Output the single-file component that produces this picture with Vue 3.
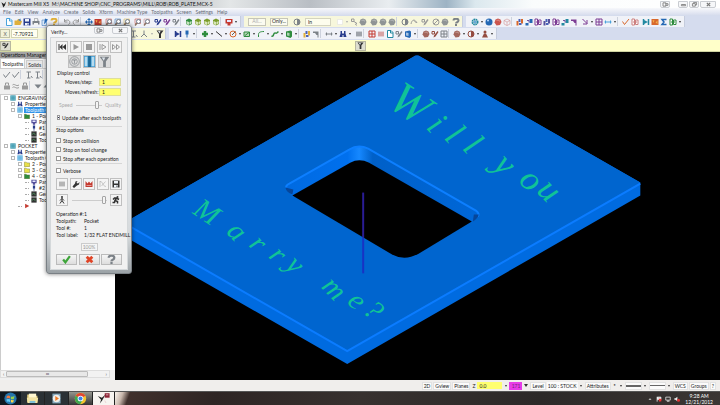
<script setup>
import { ref } from 'vue'

const menus = ['File', 'Edit', 'View', 'Analyze', 'Create', 'Solids', 'Xform', 'Machine Type', 'Toolpaths', 'Screen', 'Settings', 'Help']

// Each entry is "icon:colour"; "v" is a drop-down arrow, "|" and "||" are separators.
const parse = (s) => s.split(' ').map((t, id) => {
  const [icon, color] = t.split(':')
  return { id, icon, color }
})

const fileTools = parse('doc:sky folder:gold save:navy print:slate page:blue help:gold || undo:grey redo:grey || move:blue tiles:red | zoom:red zoom:blue zoom:gold | zoom:red zoom:rose | pen:navy pen:purple pen:slate || cube:green cube:lime cube:lime cube:lime || screen:red v')
const selectTools = parse('sheet:pale v pick:grey blob:slate | blob:slate blob:slate blob:slate || half:slate arc:grey | pen:grey | ban:grey blob:slate | help:slate')
const xformTools = parse('gear:teal v ball:blue blob:red cubeline:rose || bars:orange step:blue frames:purple bars:indigo frames:purple step:teal flag:purple | arrow:purple v grid:purple link:sky v || check:orange frames:rose | join:teal tiles:orange sigma:blue frames:green v')
const sketchA = parse('tee:slate axis:slate v filter:dark')
const sketchB = parse('join:navy pin:blue v || plus:green v line:dark v circle:orange v rect:green v fillet:green v curve:green v book:green v || bars:gold flag:slate || link:slate v people:navy v | panel:slate || grid:red panel:rose doc:teal pen:slate book:blue v || blob:brown pen:brown grid:slate || blob:brown v half:brown v person:brown v')
const managerRow1 = parse('check:slate check:slate | tee:slate tee:slate | gear:grey')
const managerRow2 = parse('lock:grey waves:grey lock:grey || down:slate up:slate tee:grey')

const tree = [
  { d: 0, i: 'node', c: 'teal', t: 'ENGRAVING', x: 1 },
  { d: 1, i: 'people', c: 'navy', t: 'Properties -', x: 1 },
  { d: 1, i: 'node', c: 'sky', t: 'Toolpath Gro', x: 1, sel: true },
  { d: 2, i: 'file', c: 'green', t: '1 - Pocke', x: 1 },
  { d: 3, i: 'screen', c: 'indigo', t: 'Param' },
  { d: 3, i: 'pin', c: 'navy', t: '#1' },
  { d: 3, i: 'chip', c: 'dark', t: 'Geom' },
  { d: 3, i: 'chip', c: 'dark', t: 'Toolp' },
  { d: 0, i: 'node', c: 'teal', t: 'POCKET', x: 1 },
  { d: 1, i: 'people', c: 'navy', t: 'Properties -', x: 1 },
  { d: 1, i: 'node', c: 'sky', t: 'Toolpath Gro', x: 1 },
  { d: 2, i: 'file', c: 'yellow', t: '2 - Pocke', x: 1 },
  { d: 2, i: 'file', c: 'yellow', t: '3 - Conto', x: 1 },
  { d: 2, i: 'file', c: 'green', t: '4 - Conto', x: 1 },
  { d: 3, i: 'screen', c: 'indigo', t: 'Param' },
  { d: 3, i: 'pin', c: 'navy', t: '#2' },
  { d: 3, i: 'chip', c: 'dark', t: 'Geom' },
  { d: 3, i: 'chip', c: 'dark', t: 'Toolp' },
  { d: 2, i: 'play', c: 'red', t: '' },
]

const transport = [
  ['rewind', 'dark', 'Restart'], ['play', 'grey', 'Play'], ['stop', 'grey', 'Stop'],
  ['stepplay', 'grey', 'Step'], ['ff', 'grey', 'Fast forward'],
]
const simulate = [['target', 'slate', 'Simulate tool'], ['tool', 'white', 'Simulate holder'], ['filter', 'slate', 'Filter']]
const options = [['panel', 'grey', 'List'], ['wrench', 'dark', 'Configure'], ['chart', 'red', 'Section'], ['cross', 'grey', 'Compare'], ['save', 'dark', 'Save STL']]
const stops = ref([
  { t: 'Stop on collision', on: false },
  { t: 'Stop on tool change', on: false },
  { t: 'Stop after each operation', on: false },
])
const update = ref(true)
const verbose = ref(false)
const step = ref('1')
const refresh = ref('1')
const quality = ref(85)
const speed = ref(98)
const facts = [['Operation #:', '1'], ['Toolpath:', 'Pocket'], ['Tool #:', '1'], ['Tool label:', '1/32 FLAT ENDMILL']]
</script>

<template>
  <svg class="defs" aria-hidden="true">
    <symbol id="doc" viewBox="0 0 16 16"><path d="M3 1h7l4 4v10H3z" fill="#fff" stroke="currentColor" stroke-width="2" /><path d="M9 1v5h5" fill="none" stroke="currentColor" stroke-width="2" /></symbol>
    <symbol id="sheet" viewBox="0 0 16 16"><path d="M3 3h10v10H3z" fill="#fff" stroke="currentColor" /></symbol>
    <symbol id="folder" viewBox="0 0 16 16"><path d="M1 14V5h5l2-3h4v3h2l2 2-3 7z" fill="currentColor" /><path d="M8 4l5-3 1 6z" fill="#4a83c8" /></symbol>
    <symbol id="save" viewBox="0 0 16 16"><path d="M1 1h14v14H1z" fill="currentColor" /><path d="M4 2h8v5H4zM4 10h8v5H4z" fill="#eef3f8" /><path d="M9 11h2v3H9z" fill="currentColor" /></symbol>
    <symbol id="print" viewBox="0 0 16 16"><path d="M4 1h8l1 5h2v7H1V6h3z" fill="currentColor" /><path d="M5 2h6v4H5zM4 10h8v5H4z" fill="#f4f4f4" /></symbol>
    <symbol id="page" viewBox="0 0 16 16"><path d="M2 4h9v11H2z" fill="#dce9f8" stroke="currentColor" /><path d="M8 1l6 2-6 8-2 1z" fill="currentColor" /></symbol>
    <symbol id="help" viewBox="0 0 16 16"><path d="M3 5C3 0 13 0 13 5c0 4-5 3-5 6" fill="none" stroke="currentColor" stroke-width="4" /><path d="M6 12h4v4H6z" fill="currentColor" /></symbol>
    <symbol id="undo" viewBox="0 0 16 16"><path d="M4 6c8-6 13 4 7 7M3 2v6h6" fill="none" stroke="currentColor" stroke-width="2" /></symbol>
    <symbol id="redo" viewBox="0 0 16 16"><path d="M12 6C4 0-1 10 5 13M13 2v6H7" fill="none" stroke="currentColor" stroke-width="2" /></symbol>
    <symbol id="move" viewBox="0 0 16 16"><path d="M8 0l4 4H4zM8 16l4-4H4zM0 8l4-4v8zM16 8l-4-4v8z" fill="currentColor" /><path d="M8 3v10M3 8h10" stroke="currentColor" stroke-width="2" /></symbol>
    <symbol id="grid" viewBox="0 0 16 16"><path d="M2 2h12v12H2zM2 8h12M8 2v12" fill="none" stroke="currentColor" stroke-width="2" /></symbol>
    <symbol id="tiles" viewBox="0 0 16 16"><path d="M1 2h14v12H1z" fill="currentColor" /><path d="M3 4l4 1-2 5zM9 9l4-4v7z" fill="#f2b04a" /></symbol>
    <symbol id="zoom" viewBox="0 0 16 16"><path d="M2 2h11v9H2z" fill="#e5ebf2" stroke="currentColor" /><circle cx="9" cy="7" r="4" fill="#fff" stroke="#737b88" stroke-width="2" /><path d="M6 10l-4 5" stroke="#8d7462" stroke-width="3" /></symbol>
    <symbol id="pen" viewBox="0 0 16 16"><path d="M2 3h5v5H2z" fill="none" stroke="currentColor" stroke-width="2" /><path d="M13 2l2 2-6 9-4 2 1-4z" fill="currentColor" /></symbol>
    <symbol id="wrench" viewBox="0 0 16 16"><path d="M1 13l5-6 1-4 4-1-2 4 3 1 3-3-1 5-4 2-6 5z" fill="currentColor" /></symbol>
    <symbol id="cube" viewBox="0 0 16 16"><path d="M8 1l6 3v8l-6 3-6-3V4z" fill="currentColor" /><path d="M8 8v6l-5-2V6zM9 8l4-2v5l-4 2z" fill="#f8ffe8" opacity=".75" /></symbol>
    <symbol id="cubeline" viewBox="0 0 16 16"><path d="M8 2l6 3v7l-6 3-6-3V5zM2 5l6 3 6-3M8 8v7" fill="none" stroke="currentColor" /></symbol>
    <symbol id="screen" viewBox="0 0 16 16"><path d="M1 2h14v9H1zM5 11h6v4H5z" fill="currentColor" /><path d="M4 4h8v4H4z" fill="#e6e6ff" /></symbol>
    <symbol id="pick" viewBox="0 0 16 16"><path d="M3 2h5v5H3zM8 7l6 4-3 1 2 3" fill="none" stroke="currentColor" stroke-width="2" /></symbol>
    <symbol id="blob" viewBox="0 0 16 16"><path d="M8 1l5 2 2 5-3 6-7 1-4-6 2-6z" fill="currentColor" opacity=".85" /><path d="M5 5l5-1 1 3" fill="none" stroke="#fff" opacity=".6" /></symbol>
    <symbol id="half" viewBox="0 0 16 16"><circle cx="8" cy="8" r="6" fill="none" stroke="currentColor" stroke-width="2" /><path d="M8 2a6 6 0 0 1 0 12z" fill="currentColor" /></symbol>
    <symbol id="arc" viewBox="0 0 16 16"><path d="M2 12C4 2 10 2 14 10M8 5l5 5" fill="none" stroke="currentColor" stroke-width="2" /></symbol>
    <symbol id="ban" viewBox="0 0 16 16"><circle cx="8" cy="8" r="6" fill="none" stroke="currentColor" stroke-width="2" /><path d="M4 12l8-8" stroke="currentColor" stroke-width="2" /></symbol>
    <symbol id="gear" viewBox="0 0 16 16"><circle cx="8" cy="8" r="5" fill="none" stroke="currentColor" stroke-width="4" stroke-dasharray="3 1" /><circle cx="8" cy="8" r="2" fill="#3b8fd0" /></symbol>
    <symbol id="ball" viewBox="0 0 16 16"><circle cx="8" cy="8" r="7" fill="currentColor" /><circle cx="6" cy="5" r="2" fill="#bcdcff" /></symbol>
    <symbol id="bars" viewBox="0 0 16 16"><path d="M1 6h4v9H1zM10 2h4v9h-4z" fill="currentColor" /><path d="M5 2h4v6H5zM6 10h5v4H6z" fill="#4a62b8" /></symbol>
    <symbol id="step" viewBox="0 0 16 16"><path d="M1 10h6v5H1zM9 2h6v8H9z" fill="currentColor" /><path d="M4 5h4v4" fill="none" stroke="#7453a0" stroke-width="2" /></symbol>
    <symbol id="frames" viewBox="0 0 16 16"><path d="M2 2h5v12H2zM9 4h5v9H9z" fill="#fff" stroke="currentColor" stroke-width="2" /><path d="M4 8h8" stroke="currentColor" stroke-width="2" /></symbol>
    <symbol id="flag" viewBox="0 0 16 16"><path d="M2 3h11v7H9L6 6H2zM11 10h2v5h-2z" fill="currentColor" /></symbol>
    <symbol id="arrow" viewBox="0 0 16 16"><path d="M3 2l9 9M12 4v8H4" fill="none" stroke="currentColor" stroke-width="2" /></symbol>
    <symbol id="link" viewBox="0 0 16 16"><path d="M1 8h14M3 5v6M13 5v6" stroke="currentColor" stroke-width="2" /></symbol>
    <symbol id="check" viewBox="0 0 16 16"><path d="M1 7l4 6 9-11" fill="none" stroke="currentColor" stroke-width="2" /></symbol>
    <symbol id="join" viewBox="0 0 16 16"><path d="M3 2v12M13 2v12" stroke="currentColor" stroke-width="3" /><path d="M4 4l8 4-8 4z" fill="currentColor" /></symbol>
    <symbol id="sigma" viewBox="0 0 16 16"><path d="M13 3H4l4 5-4 5h9" fill="none" stroke="currentColor" stroke-width="3" /></symbol>
    <symbol id="tee" viewBox="0 0 16 16"><path d="M3 2h9M7 2v12M4 14h7M12 10l3 4" stroke="currentColor" stroke-width="2" /></symbol>
    <symbol id="axis" viewBox="0 0 16 16"><path d="M8 1v7l-6 6M8 8l6 6" fill="none" stroke="currentColor" stroke-width="2" /></symbol>
    <symbol id="filter" viewBox="0 0 16 16"><path d="M1 1h14l-5 7v8H6V8z" fill="currentColor" /><path d="M4 2h5L7 7z" fill="#dce3ea" /></symbol>
    <symbol id="pin" viewBox="0 0 16 16"><path d="M5 1h6v8H5zM7 9h2v6H7z" fill="currentColor" /></symbol>
    <symbol id="plus" viewBox="0 0 16 16"><path d="M8 2v12M2 8h12" stroke="currentColor" stroke-width="5" /></symbol>
    <symbol id="line" viewBox="0 0 16 16"><path d="M2 3l12 10" stroke="currentColor" stroke-width="2" /></symbol>
    <symbol id="circle" viewBox="0 0 16 16"><circle cx="8" cy="8" r="6" fill="none" stroke="currentColor" stroke-width="2" /><path d="M6 10l7-7" stroke="#685c50" stroke-width="2" /></symbol>
    <symbol id="rect" viewBox="0 0 16 16"><path d="M2 4h11v9H2z" fill="#b8d8b8" stroke="currentColor" stroke-width="2" /><path d="M4 11l8-6" stroke="currentColor" stroke-width="2" /></symbol>
    <symbol id="fillet" viewBox="0 0 16 16"><path d="M3 14V9c0-4 3-6 11-6" fill="none" stroke="currentColor" stroke-width="2" /></symbol>
    <symbol id="curve" viewBox="0 0 16 16"><path d="M1 12c5 2 3-6 7-6s3 2 7-3" fill="none" stroke="currentColor" stroke-width="3" /></symbol>
    <symbol id="book" viewBox="0 0 16 16"><path d="M2 3l9-2 3 2v10l-3 3-9-3z" fill="currentColor" /><path d="M4 5l5 1v6l-5-1z" fill="#fff" opacity=".6" /></symbol>
    <symbol id="people" viewBox="0 0 16 16"><path d="M3 2h3v5h4V2h3v5l2 7H9v-4H7v4H1l2-7z" fill="currentColor" /></symbol>
    <symbol id="panel" viewBox="0 0 16 16"><path d="M2 3h12v10H2z" fill="currentColor" opacity=".6" /><path d="M2 6h12M2 10h12" stroke="currentColor" /></symbol>
    <symbol id="person" viewBox="0 0 16 16"><circle cx="8" cy="4" r="3" fill="currentColor" /><path d="M6 7h4l4 8H2z" fill="currentColor" /></symbol>
    <symbol id="lock" viewBox="0 0 16 16"><path d="M2 7h12v8H2z" fill="currentColor" /><path d="M5 7V2h6v5" fill="none" stroke="currentColor" stroke-width="2" /></symbol>
    <symbol id="waves" viewBox="0 0 16 16"><path d="M1 6c4-4 7 4 13 0M1 11c4-4 7 4 13 0" fill="none" stroke="currentColor" stroke-width="2" /></symbol>
    <symbol id="down" viewBox="0 0 16 16"><path d="M1 5h14l-7 8z" fill="currentColor" /></symbol>
    <symbol id="up" viewBox="0 0 16 16"><path d="M1 11h14L8 3z" fill="currentColor" /></symbol>
    <symbol id="node" viewBox="0 0 16 16"><path d="M1 1h14v14H1z" fill="currentColor" /><path d="M1 5h14M1 11h14M5 1v14M11 1v14" stroke="#c8eef8" stroke-width="1" /></symbol>
    <symbol id="file" viewBox="0 0 16 16"><path d="M1 3h5l2 2h7v10H1z" fill="currentColor" stroke="#5f6420" /></symbol>
    <symbol id="chip" viewBox="0 0 16 16"><path d="M1 1h14v14H1z" fill="currentColor" /><path d="M3 10l4-5 5 6" fill="none" stroke="#4f9c62" stroke-width="2" /></symbol>
    <symbol id="play" viewBox="0 0 16 16"><path d="M3 2l11 6-11 6z" fill="currentColor" /></symbol>
    <symbol id="rewind" viewBox="0 0 16 16"><path d="M1 2h2v12H1zM9 2v12L3 8zM16 2v12l-7-6z" fill="currentColor" /></symbol>
    <symbol id="stop" viewBox="0 0 16 16"><path d="M2 2h12v12H2z" fill="currentColor" /></symbol>
    <symbol id="stepplay" viewBox="0 0 16 16"><path d="M1 2h2v12H1z" fill="currentColor" /><path d="M6 3l8 5-8 5z" fill="none" stroke="currentColor" stroke-width="2" /></symbol>
    <symbol id="ff" viewBox="0 0 16 16"><path d="M1 3l6 5-6 5zM9 3l6 5-6 5z" fill="none" stroke="currentColor" stroke-width="2" /></symbol>
    <symbol id="target" viewBox="0 0 16 16"><circle cx="8" cy="8" r="7" fill="none" stroke="currentColor" /><circle cx="8" cy="8" r="4" fill="none" stroke="currentColor" /><path d="M6 6h4M8 6v5" stroke="currentColor" /></symbol>
    <symbol id="tool" viewBox="0 0 16 16"><path d="M0 0h16v16H0z" fill="#3d9ad0" /><path d="M1 1h4v14H1zM11 1h4v14h-4z" fill="#b7dcf0" /><path d="M6 0h4v16H6z" fill="#1b6796" /></symbol>
    <symbol id="chart" viewBox="0 0 16 16"><path d="M1 2l4 5 3-4 3 4 4-5v12H1z" fill="currentColor" /><path d="M3 11h10" stroke="#fff" /></symbol>
    <symbol id="cross" viewBox="0 0 16 16"><path d="M2 2v12M2 3c7 0 4 9 12 10M5 12l8-9" fill="none" stroke="currentColor" /></symbol>
    <symbol id="walk" viewBox="0 0 16 16"><circle cx="8" cy="2" r="2" fill="currentColor" /><path d="M8 4v5l-4 6M8 9l4 6M4 9l4-4 4 4" fill="none" stroke="currentColor" stroke-width="2" /></symbol>
    <symbol id="run" viewBox="0 0 16 16"><circle cx="11" cy="2" r="2" fill="currentColor" /><path d="M9 4L6 9l5 2v4M6 9l-1 4H1M2 7l3-3h4l5 3" fill="none" stroke="currentColor" stroke-width="3" /></symbol>
    <symbol id="ok" viewBox="0 0 16 16"><path d="M2 8l4 5 8-11" fill="none" stroke="#3ea53a" stroke-width="4" /></symbol>
    <symbol id="no" viewBox="0 0 16 16"><path d="M3 3l10 10M13 3L3 13" stroke="#e04426" stroke-width="5" /></symbol>
  </svg>

  <div class="app">
    <header class="titlebar">
      <svg class="logo" viewBox="0 0 16 16"><path d="M2 3l6 4 5-6-3 9-4 5-1-5z" fill="#222" /></svg>
      <h1>Mastercam Mill X5&nbsp; M:\MACHINE SHOP\CNC_PROGRAMS\MILL\ROB\ROB_PLATE.MCX-5</h1>
      <div class="wins">
        <button class="swap" aria-label="Switch"><svg viewBox="0 0 16 12"><path d="M2 2h7v8H2zM8 4h6v4H8" fill="none" stroke="#777" stroke-width="2" /></svg></button>
        <button aria-label="Minimize"><svg viewBox="0 0 16 12"><path d="M3 6h10v3H3z" fill="none" stroke="#777" stroke-width="2" /></svg></button>
        <button aria-label="Maximize"><svg viewBox="0 0 16 12"><path d="M3 4h7v6H3zM6 4V1h7v6h-3" fill="none" stroke="#777" stroke-width="2" /></svg></button>
        <button class="close" aria-label="Close"><svg viewBox="0 0 16 12"><path d="M4 2l8 8M12 2l-8 8" stroke="#777" stroke-width="3" /></svg></button>
      </div>
    </header>

    <nav class="menubar"><a v-for="m in menus" :key="m" href="#">{{ m }}</a></nav>

    <div class="toolbar">
      <div class="group">
        <template v-for="t in fileTools" :key="t.id">
          <i v-if="t.icon === '|'" class="sep" /><i v-else-if="t.icon === '||'" class="sep wide" /><i v-else-if="t.icon === 'v'" class="caret" />
          <button v-else class="tool" :class="t.color" :aria-label="t.icon"><svg><use :href="'#' + t.icon" /></svg></button>
        </template>
      </div>
      <div class="group warm">
        <button class="word dim">All...</button>
        <button class="word">Only...</button>
        <button class="tool slate" aria-label="Select"><svg><use href="#half" /></svg></button>
        <select class="mode" aria-label="Selection mode"><option>In</option></select>
        <template v-for="t in selectTools" :key="t.id">
          <i v-if="t.icon === '|'" class="sep" /><i v-else-if="t.icon === '||'" class="sep wide" /><i v-else-if="t.icon === 'v'" class="caret faint" />
          <button v-else class="tool" :class="t.color" :aria-label="t.icon"><svg><use :href="'#' + t.icon" /></svg></button>
        </template>
      </div>
      <div class="group">
        <template v-for="t in xformTools" :key="t.id">
          <i v-if="t.icon === '|'" class="sep" /><i v-else-if="t.icon === '||'" class="sep wide" /><i v-else-if="t.icon === 'v'" class="caret" />
          <button v-else class="tool" :class="t.color" :aria-label="t.icon"><svg><use :href="'#' + t.icon" /></svg></button>
        </template>
      </div>
    </div>

    <div class="toolbar">
      <div class="group warm coords">
        <button class="axisbtn">X</button>
        <select class="coord" aria-label="X coordinate"><option>-7.70921</option></select>
        <i class="fill" />
        <template v-for="t in sketchA" :key="t.id">
          <i v-if="t.icon === 'v'" class="caret faint" />
          <button v-else class="tool" :class="t.color" :aria-label="t.icon"><svg><use :href="'#' + t.icon" /></svg></button>
        </template>
      </div>
      <div class="group">
        <template v-for="t in sketchB" :key="t.id">
          <i v-if="t.icon === '|'" class="sep" /><i v-else-if="t.icon === '||'" class="sep wide" /><i v-else-if="t.icon === 'v'" class="caret" />
          <button v-else class="tool" :class="t.color" :aria-label="t.icon"><svg><use :href="'#' + t.icon" /></svg></button>
        </template>
      </div>
    </div>

    <div class="ribbon">
      <button class="tool framed dark" aria-label="Sketcher"><svg><use href="#pen" /></svg></button>
      <button class="tool framed dark" aria-label="Filter"><svg><use href="#filter" /></svg></button>
      <span />
    </div>

    <main class="work">
      <aside class="manager">
        <h2>Operations Manager</h2>
        <div class="tabs"><button class="on">Toolpaths</button><button>Solids</button></div>
        <div class="mtools">
          <template v-for="t in managerRow1" :key="t.id">
            <i v-if="t.icon[0] === '|'" class="sep wide" />
            <button v-else class="tool" :class="t.color" :aria-label="t.icon"><svg><use :href="'#' + t.icon" /></svg></button>
          </template>
        </div>
        <div class="mtools">
          <template v-for="t in managerRow2" :key="t.id">
            <i v-if="t.icon[0] === '|'" class="sep wide" />
            <button v-else class="tool" :class="t.color" :aria-label="t.icon"><svg><use :href="'#' + t.icon" /></svg></button>
          </template>
        </div>
        <ul class="tree">
          <li v-for="(n, k) in tree" :key="k" :class="['d' + n.d, { sel: n.sel }]">
            <b v-if="n.x" class="exp" /><i v-else class="stem" />
            <svg :class="n.c"><use :href="'#' + n.i" /></svg><span>{{ n.t }}</span>
          </li>
        </ul>
        <div class="hscroll"><i>‹</i><b>ııı</b><i>›</i></div>
      </aside>

      <svg class="scene" viewBox="115 51 605 329" preserveAspectRatio="xMidYMid meet">
        <defs>
          <linearGradient id="wall" x1="0" x2="1"><stop offset="0" stop-color="#006ae0" /><stop offset=".32" stop-color="#0070ee" /><stop offset=".38" stop-color="#1688ff" /><stop offset=".45" stop-color="#0060c8" /><stop offset="1" stop-color="#0067d8" /></linearGradient>
        </defs>
        <path d="M122 223L413 56Q417 53 421 56L641 182V195L347 364L122 235z" fill="#006be0" />
        <path d="M122 223L413 56Q417 53 421 56L641 182L347 350z" fill="#0065cf" />
        <path d="M122 222L347 351L641 183" fill="none" stroke="#0b7cff" stroke-width="2" />
        <path d="M286 188Q284 185 289 183L349 149Q358 143 368 148L476 210Q481 213 478 217L472 222L292 196z" fill="url(#wall)" />
        <path d="M286 187Q285 185 289 183L349 149Q358 143 368 148L476 210Q480 213 478 216" fill="none" stroke="#0d7fff" stroke-width="2" />
        <path d="M285 187q1 5 7 7l1-5zM479 214q-1 4-6 7l1-7z" fill="#06469a" />
        <path d="M292 195L350 162Q359 157 369 162L472 221L419 253Q405 261 392 254z" fill="#000" />
        <path d="M363 192V237" stroke="#2a1c94" stroke-width="2" /><path d="M363 237V273" stroke="#1733c4" stroke-width="2" />
        <g class="engraving">
          <text class="large" transform="translate(394 109) rotate(30)" x="-9 36 57 78 103 113 143 164" rotate="4 16"><tspan class="capital">W</tspan>ill you</text>
          <text class="small" transform="translate(192 213) rotate(30)" x="-1 38 64 87 106 128 148 178 196" rotate="4 16">Marry me?</text>
        </g>
      </svg>

      <section class="dialog" aria-label="Verify">
        <div class="dtitle"><span>Verify...</span>
          <button aria-label="Switch"><svg viewBox="0 0 16 12"><path d="M2 2h7v8H2zM8 4h6v4H8" fill="none" stroke="#777" stroke-width="2" /></svg></button>
          <button class="x" aria-label="Close"><svg viewBox="0 0 16 12"><path d="M4 2l8 8M12 2l-8 8" stroke="#777" stroke-width="3" /></svg></button>
        </div>
        <div class="dbody">
          <div class="row"><button v-for="b in transport" :key="b[2]" class="sq" :class="b[1]" :aria-label="b[2]"><svg><use :href="'#' + b[0]" /></svg></button></div>
          <div class="row mid"><button v-for="b in simulate" :key="b[2]" class="sq big" :class="b[1]" :aria-label="b[2]"><svg><use :href="'#' + b[0]" /></svg></button></div>
          <fieldset class="display">
            <legend>Display control</legend>
            <label class="field"><span>Moves/step:</span><input v-model="step" type="text" /></label>
            <label class="field"><span>Moves/refresh:</span><input v-model="refresh" type="text" /></label>
            <label class="slide"><span>Speed</span><input v-model="quality" type="range" /><span>Quality</span></label>
            <label class="tick"><input v-model="update" type="checkbox" />Update after each toolpath</label>
          </fieldset>
          <fieldset class="stops">
            <legend>Stop options</legend>
            <label v-for="s in stops" :key="s.t" class="tick"><input v-model="s.on" type="checkbox" />{{ s.t }}</label>
          </fieldset>
          <label class="tick lone"><input v-model="verbose" type="checkbox" />Verbose</label>
          <div class="row opts"><button v-for="b in options" :key="b[2]" class="sq" :class="b[1]" :aria-label="b[2]"><svg><use :href="'#' + b[0]" /></svg></button></div>
          <div class="row speed">
            <button class="sq dark" aria-label="Slower"><svg><use href="#walk" /></svg></button>
            <input v-model="speed" type="range" aria-label="Verify speed" />
            <button class="sq dark" aria-label="Faster"><svg><use href="#run" /></svg></button>
          </div>
          <dl><template v-for="f in facts" :key="f[0]"><dt>{{ f[0] }}</dt><dd>{{ f[1] }}</dd></template></dl>
          <input class="pct" type="text" value="100%" aria-label="Progress" disabled />
          <div class="row end">
            <button class="act" aria-label="OK"><svg><use href="#ok" /></svg></button>
            <button class="act" aria-label="Cancel"><svg><use href="#no" /></svg></button>
            <button class="act slate" aria-label="Help"><svg><use href="#help" /></svg></button>
          </div>
        </div>
      </section>
    </main>

    <footer class="status">
      <button>2D</button><button>Gview</button><button>Planes</button>
      <label class="z">Z<input type="text" value="0.0" /></label><i class="caret" />
      <button class="level">171</button><i class="tri" />
      <button>Level</button><select class="lv" aria-label="Level"><option>100 : STOCK</option></select><i class="caret" />
      <button>Attributes</button><b class="star">*</b><i class="caret" />
      <b class="ln thick" /><i class="caret" /><b class="ln" /><i class="caret" />
      <button>WCS</button><button>Groups</button><button>?</button>
    </footer>

    <div class="taskbar">
      <button class="task start" aria-label="Start"><svg viewBox="0 0 32 32"><circle cx="16" cy="16" r="15" fill="#2475ad" /><path d="M7 10q4-3 8 0v6q-4-2-9 0z" fill="#f07840" /><path d="M17 11q4 2 9-1l-2 7q-4 2-7 0z" fill="#9bd04a" /><path d="M6 18q5-2 9 0v7q-4-3-8-1z" fill="#5fc7f4" /><path d="M17 19q4 2 7 0l-1 6q-3 2-6 0z" fill="#ffd64a" /></svg></button>
      <button class="task" aria-label="Explorer"><svg viewBox="0 0 32 32"><path d="M3 6h10l3 3h12v17H3z" fill="#e6cf80" /><path d="M7 4h18v10H7z" fill="#fff7d0" /><path d="M2 14h28l-2 13H4z" fill="#f3e4a2" /><path d="M9 22h14v5H9z" fill="#7dbfd8" /></svg></button>
      <button class="task" aria-label="Media player"><svg viewBox="0 0 32 32"><path d="M6 4h20v24H6z" fill="#86a9bd" /><circle cx="16" cy="16" r="9" fill="#f0ede8" /><path d="M13 10l9 6-9 6z" fill="#f07a24" /></svg></button>
      <button class="task lit" aria-label="Chrome"><svg viewBox="0 0 32 32"><circle cx="16" cy="16" r="14" fill="#f4c52d" /><path d="M16 16L4 9a14 14 0 0 1 24 0z" fill="#df4535" /><path d="M16 16L4 9a14 14 0 0 0 11 21l7-11z" fill="#3da852" /><circle cx="16" cy="16" r="7" fill="#fff" /><circle cx="16" cy="16" r="5" fill="#3d82e8" /></svg></button>
      <button class="task active" aria-label="Mastercam"><svg viewBox="0 0 32 32"><path d="M2 10l10 4 9-8-8 14-6 8 3-9z" fill="#222" /><path d="M19 3h12v11H19z" fill="#8f2436" /><path d="M22 7h6M19 21l3 6" stroke="#e8c9cc" stroke-width="2" /></svg></button>
      <div class="tray">
        <svg viewBox="0 0 16 16"><path d="M4 10l4-4 4 4z" fill="#ddd" /></svg>
        <svg viewBox="0 0 16 16"><path d="M3 2v13M4 3h9v6H4z" stroke="#fff" fill="#ddd" stroke-width="2" /><path d="M8 8l6 6M14 8l-6 6" stroke="#e33" stroke-width="3" /></svg>
        <svg viewBox="0 0 16 16"><path d="M2 3h12v8H2zM8 11v3M5 14h7" fill="none" stroke="#eee" stroke-width="2" /></svg>
        <svg viewBox="0 0 16 16"><path d="M1 6h3l5-4v12l-5-4H1z" fill="#eee" /><circle cx="12" cy="11" r="4" fill="#d33" /></svg>
        <time>9:28 AM<br />12/21/2012</time>
      </div>
    </div>
  </div>
</template>

<style>
body { margin: 0; }
</style>

<style scoped>
* { box-sizing: border-box; }
.defs { position: absolute; width: 0; height: 0; }
.app { display: flex; flex-direction: column; height: 100vh; overflow: hidden; font: 5px/6px Lato, "Liberation Sans", sans-serif; color: #222; background: #d5dcee; }
button, input, select { font: inherit; color: inherit; margin: 0; padding: 0; border: 0; background: none; border-radius: 0; min-width: 0; }
select { appearance: none; }
h1, h2, ul, dl, dd, fieldset, legend { margin: 0; padding: 0; font-size: inherit; font-weight: normal; }
i { font-style: normal; flex: none; }
svg { display: block; }

.titlebar { display: flex; align-items: flex-start; height: 8px; padding: 1px 4px 0 0; background: linear-gradient(90deg, #e2e4e5, #c5c9cc 26%, #e3e6e7 32%, #b9bec4 43%, #e9edf0 54%, #9db3c4 62%, #dbe8ee 66%, #fafcfc 74%, #fff); }
.logo { width: 8px; height: 7px; }
.titlebar h1 { flex: 1; white-space: nowrap; color: #111; }
.wins { display: flex; gap: 1px; }
.wins button, .dtitle button { width: 10px; height: 7px; border: 1px solid #c9ccd1; border-radius: 0 0 2px 2px; background: #f6f7f9; display: grid; place-items: center; }
.wins svg, .dtitle button svg { width: 7px; height: 5px; }
.wins .swap { margin-right: 7px; }
.wins .close { width: 16px; }

.menubar { display: flex; gap: 4px; height: 8px; padding: 1px 3px; background: linear-gradient(#f7f8fb, #e2e6f2 60%, #d3daec); }
.menubar a { color: #676c78; text-decoration: none; white-space: nowrap; }

.toolbar { display: flex; gap: 3px; height: 11px; margin-bottom: 1px; }
.group { display: flex; align-items: center; padding: 0 2px 0 4px; background: #f0f2f8; border-right: 1px solid #c5ccdd; }
.group.warm { background: #f7f7dc; }
.coords { width: 166px; padding: 0 1px 0 0; gap: 1px; }
.fill { flex: 1; }
.tool { width: 9px; height: 9px; flex: none; display: grid; place-items: center; }
.tool svg { width: 8px; height: 8px; }
.sep { width: 2px; height: 9px; }
.sep.wide { width: 4px; border-left: 1px solid #cdd2dd; }
.caret { width: 5px; height: 9px; display: grid; place-items: center; flex: none; }
.caret::after, .tri { content: ""; border: 1px solid transparent; border-top: 2px solid #333; border-bottom: 0; }
.caret.faint::after { border-top-color: #aaa; }
.word { height: 8px; width: 18px; margin-right: 4px; border: 1px solid #c6c6b8; background: #fbfbf0; line-height: 5px; }
.word.dim { color: #aaa; }
.mode { width: 26px; height: 8px; margin: 0 4px; padding-left: 2px; border: 1px solid #d4d4bf; background: #fdfded; }
.axisbtn { width: 10px; height: 9px; border: 1px solid #c2c2a8; background: #f2f2da; color: #666; line-height: 6px; }
.coord { width: 27px; height: 9px; border: 1px solid #d4d4b4; padding-left: 1px; background: #fffff0; }

.ribbon { display: grid; grid-template-columns: 1fr 11px 1fr; align-items: center; height: 12px; border-bottom: 1px solid #ced3a0; background: #ffffc9; }
.framed { width: 11px; height: 10px; background: #deded0; border: 1px solid #b8b8a0; }
.framed svg { width: 7px; height: 7px; }

.work { position: relative; flex: 1; min-height: 0; display: flex; background: #000; }
.scene { flex: 1; min-width: 0; height: 100%; }
.engraving { font-family: "Liberation Serif", serif; font-style: italic; fill: #10c397; }
.large { font-size: 35px; }
.capital { font-size: 46px; }
.small { font-size: 29px; }

.manager { width: 115px; flex: none; display: flex; flex-direction: column; background: #f0f0f0; }
.manager h2 { height: 7px; padding-left: 1px; background: linear-gradient(90deg, #9b9b9b, #c5c5c5); color: #111; }
.tabs { display: flex; align-items: flex-end; height: 10px; gap: 1px; border-bottom: 1px solid #ccc; }
.tabs button { height: 8px; padding: 0 1px; background: #e8e8e8; border: 1px solid #ccc; border-bottom: 0; }
.tabs .on { height: 10px; background: #fff; }
.mtools { display: flex; align-items: center; height: 11px; padding-left: 2px; }
.tree { flex: 1; margin: 3px 0 0; padding: 0; list-style: none; background: #fff; overflow: hidden; border: 1px solid #ccc; border-width: 1px 0 0 1px; }
.tree li { display: flex; align-items: center; height: 6px; white-space: nowrap; gap: 1px; }
.tree li svg { width: 6px; height: 6px; flex: none; }
.tree li span { padding-left: 1px; line-height: 6px; }
.tree .sel span { background: #3393e8; color: #fff; }
.d0 { padding-left: 3px; }
.d1 { padding-left: 10px; }
.d2 { padding-left: 17px; }
.d3 { padding-left: 24px; }
.exp { width: 4px; height: 4px; border: 1px solid #b8b8b8; background: #fff; margin-right: 1px; }
.stem { width: 4px; border-top: 1px dotted #aaa; margin-right: 1px; }
.hscroll { display: flex; justify-content: space-between; align-items: center; height: 8px; margin: 0 5px 2px 0; padding: 0 2px; background: #f2f2f2; border: 1px solid #ddd; color: #555; }
.hscroll b { width: 82px; height: 6px; margin-right: 15px; border: 1px solid #bbb; border-radius: 1px; background: #e8e8e8; text-align: center; font-size: 4px; line-height: 4px; }

.dialog { position: absolute; left: 46px; top: -27px; width: 86px; padding: 1px 3px 3px; border: 1px solid #7a8085; border-radius: 3px; background: linear-gradient(#f5f6f7, #e8ebed 50%, #d5d9dc 85%, #9ba2a6); box-shadow: 0 0 4px #0008; }
.dtitle { display: flex; align-items: flex-start; height: 10px; padding-left: 1px; }
.dtitle span { flex: 1; padding-top: 2px; }
.dtitle .x { width: 16px; margin-left: 8px; }
.dbody { background: #f1f1f1; border: 1px solid #d4d8da; padding: 3px 5px 4px; }
.row { display: flex; justify-content: space-between; }
.row.mid { justify-content: center; gap: 2px; margin: 2px 0; }
.sq { width: 12px; height: 12px; border: 1px solid #c0c0c0; background: #f4f4f4; display: grid; place-items: center; }
.sq svg { width: 8px; height: 8px; }
.sq.big { width: 13px; height: 13px; background: #dcdcdc; }
.sq.big svg { width: 11px; height: 11px; }
fieldset { border: 0; border-bottom: 1px solid #d6d6d6; min-width: 0; }
legend { height: 7px; }
.field { display: flex; align-items: center; height: 10px; padding-left: 8px; }
.field span { flex: 1; }
.field input { width: 22px; height: 8px; padding-left: 2px; background: #ffff70; border: 1px solid #dede9c; }
.slide { display: flex; align-items: center; height: 16px; padding-left: 2px; gap: 3px; color: #aaa; }
.slide input { flex: 1; }
input[type="range"] { appearance: none; height: 9px; background: linear-gradient(#ccc, #ccc) center / 100% 1px no-repeat; }
input[type="range"]::-webkit-slider-thumb { appearance: none; width: 4px; height: 8px; border: 1px solid #a5a5a5; border-radius: 1px; background: #f4f4f4; }
.display { padding: 0 1px 3px; height: 57px; }
.stops { height: 37px; padding-top: 2px; }
.tick { display: flex; align-items: center; height: 9px; gap: 2px; white-space: nowrap; }
.tick input { appearance: none; width: 5px; height: 5px; border: 1px solid #999; background: #fff; }
.tick input:checked { background: linear-gradient(135deg, #fff 30%, #335 30% 70%, #fff 70%); }
.lone { margin: 2px 0 3px; }
.speed { align-items: center; margin-top: 4px; }
.speed input { width: 35px; }
dl { display: grid; grid-template-columns: 28px 1fr; margin-top: 5px; line-height: 7px; white-space: nowrap; }
.pct { display: block; width: 17px; height: 8px; margin: 4px auto 3px; border: 1px solid #ccc; text-align: center; color: #999; background: #f5f5f5; }
.act { width: 21px; height: 11px; border: 1px solid #bbb; background: linear-gradient(#f6f6f6, #ddd); display: grid; place-items: center; }
.act svg { width: 9px; height: 9px; }

.status { display: flex; align-items: center; justify-content: flex-end; gap: 1px; height: 11px; padding-right: 4px; background: #f0eeec; white-space: nowrap; }
.status button, .lv, .ln { height: 8px; padding: 0 1px; background: #fbfbfb; border: 1px solid #e2e2e2; line-height: 6px; }
.z { display: flex; gap: 2px; align-items: center; padding: 0 0 0 1px; }
.z input { width: 25px; height: 7px; padding-left: 2px; background: #ffff70; }
.status .level { background: #e83ce8; color: #702a78; width: 13px; padding: 0; border-color: #e83ce8; }
.tri { border-width: 3px 2px 0; width: 0; margin: 0 1px; }
.status .lv { width: 31px; border: 0; padding: 0 0 0 1px; }
.star { width: 6px; text-align: center; }
.ln { width: 17px; background: linear-gradient(#666, #666) center / 15px 1px no-repeat #fbfbfb; }
.ln.thick { background-size: 15px 2px; }

.taskbar { display: flex; height: 14px; border-top: 1px solid #555; background: linear-gradient(110deg, #17181a 15%, #f6efe8 16%, #c8b7ac 17%, #40302c 18%, #2e2524 30%, #37312f 50%, #2c2928 75%, #3b3634); color: #fff; }
.task { width: 24px; display: grid; place-items: center; background: #2b3135; border-right: 1px solid #222; }
.task svg { width: 13px; height: 13px; }
.task.start { width: 21px; background: #101820; border: 0; }
.task.lit { background: linear-gradient(#94958e, #343434); }
.task.active { width: 22px; background: #f7f4f0; }
.tray { margin-left: auto; display: flex; align-items: center; gap: 3px; padding-right: 7px; }
.tray svg { width: 6px; height: 6px; }
.tray time { margin-left: 2px; text-align: center; line-height: 6px; }

.red { color: #c43a30; } .rose { color: #cc8080; } .orange { color: #d8682c; } .gold { color: #dfb03c; } .yellow { color: #e8e04a; }
.green { color: #2e8c3e; } .lime { color: #7a9c2c; } .teal { color: #2288a0; } .sky { color: #4aa3dc; } .blue { color: #2468b4; }
.navy { color: #283c8c; } .indigo { color: #55509c; } .purple { color: #7c3c94; } .brown { color: #944c40; } .slate { color: #7c8288; }
.grey { color: #9a9a9a; } .pale { color: #ddd; } .dark { color: #333; } .white { color: #fff; }
</style>
